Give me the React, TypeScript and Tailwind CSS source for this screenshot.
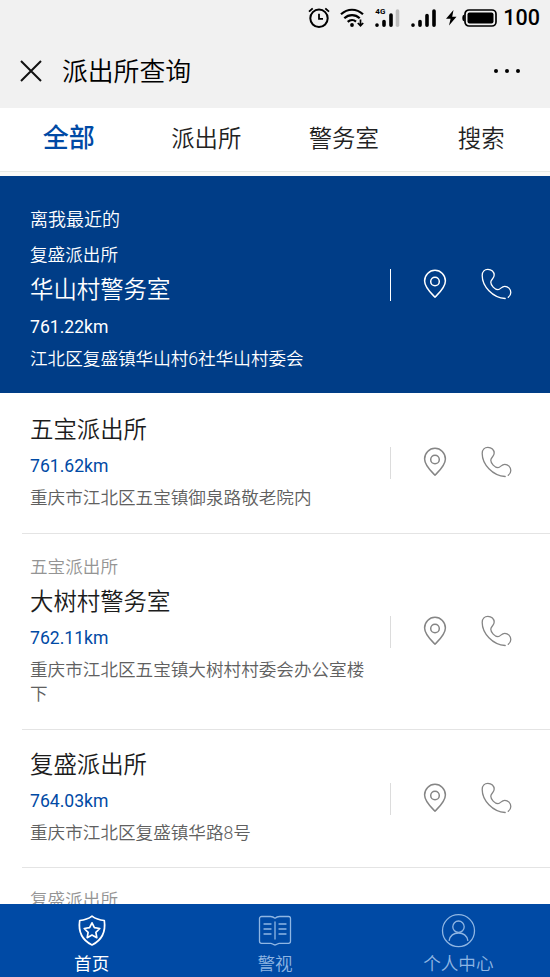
import clsx from "clsx";

interface Station {
  parent?: string;
  name?: string;
  distance?: string;
  address?: string;
  spacing: string;
}

const tabs = ["全部", "派出所", "警务室", "搜索"];

const stations: Station[] = [
  {
    name: "五宝派出所",
    distance: "761.62km",
    address: "重庆市江北区五宝镇御泉路敬老院内",
    spacing: "pt-4 pb-[23px]",
  },
  {
    parent: "五宝派出所",
    name: "大树村警务室",
    distance: "762.11km",
    address: "重庆市江北区五宝镇大树村村委会办公室楼下",
    spacing: "pt-[21px] pb-[23px]",
  },
  {
    name: "复盛派出所",
    distance: "764.03km",
    address: "重庆市江北区复盛镇华路8号",
    spacing: "pt-[14px] pb-[22px]",
  },
  {
    parent: "复盛派出所",
    spacing: "pt-5 pb-6",
  },
];

function StatusBar() {
  return (
    <div className="flex h-9 items-center justify-end pr-[10px] text-black">
      <svg className="mr-[10px] h-[22px] w-[22px]" viewBox="0 0 22 22" fill="none" stroke="currentColor" strokeWidth="2">
        <circle cx="11" cy="11.3" r="8.7" />
        <path d="M11 6.8v5h4M1 4.7 4.700 1.300M21 4.700 17.300 1.300" strokeWidth="1.8" />
      </svg>
      <svg className="mr-[11px] h-[22px] w-6" viewBox="0 0 24 22" fill="none" stroke="currentColor" strokeWidth="2.2">
        <path d="M1 7.3C7.5 1.2 16.5 1.2 23 7.3M4.3 11.2c4.5-4.2 11-4.2 15.4 0M7.7 14.9c2.6-2.3 6-2.3 8.3-.3" />
        <circle cx="12" cy="18" r="1.9" fill="currentColor" stroke="none" />
        <path d="M20.5 12.5v6M17.8 16l2.7 2.8 2.7-2.8" strokeWidth="1.7" />
      </svg>
      <div className="relative mr-[11px] h-[22px] w-[25px]">
        <span className="absolute top-0 left-0 font-['Roboto',sans-serif] text-[8px] leading-[9px] font-bold">4G</span>
        <svg className="h-[22px] w-[25px]" viewBox="0 0 25 22" strokeWidth="3.6" strokeLinecap="round">
          <path d="M2 18v.2M9 14.5v3.7M16 8v10.2" stroke="black" />
          <path d="M22.5 4v14.2" stroke="#bdbdbd" />
        </svg>
      </div>
      <svg className="mr-[10px] h-[22px] w-[25px]" viewBox="0 0 25 22" strokeWidth="3.6" strokeLinecap="round" stroke="black">
        <path d="M2 18v.2M9 14.5v3.7M16 8.5v9.7M23 4v14.2" />
      </svg>
      <svg className="mr-[5px] h-[18px] w-[11px]" viewBox="0 0 11 18" fill="currentColor">
        <path d="M7.5 1 0 9.7h4.6L3 16.5l7.5-8.7H6.2z" />
      </svg>
      <svg className="mr-[6px] h-5 w-[35px]" viewBox="0 0 35 20">
        <path d="M2.5 6.5v7C.9 13.2.3 12 .3 10s.6-3.2 2.2-3.5z" />
        <rect x="3" y="2" width="31" height="16" rx="4" fill="none" stroke="black" strokeWidth="1.7" />
        <rect x="5.5" y="4.5" width="26" height="11" rx="2" />
      </svg>
      <span className="font-['Roboto',sans-serif] text-[21.5px] leading-none font-medium">100</span>
    </div>
  );
}

function PinIcon() {
  return (
    <svg className="h-[30px] w-6" viewBox="0 0 24 30" fill="none" stroke="currentColor" strokeWidth="1.5" strokeLinejoin="round">
      <path d="M12 28.2C8 24.2 1.6 18.5 1.6 12a10.4 10.7 0 0 1 20.8 0c0 6.5-6.4 12.2-10.4 16.2z" />
      <circle cx="12" cy="12.5" r="4.3" />
    </svg>
  );
}

function PhoneIcon() {
  return (
    <svg className="h-8 w-8" viewBox="0 0 32 32" fill="none" stroke="currentColor" strokeWidth="1.3" strokeLinecap="round">
      <path d="M24.2 30.5C11.5 29.8 1.2 18.2 1.2 7.5c0-4 2.5-6.2 5.7-6.2 3.7 0 6.3 2.7 6.3 5.8 0 3.5-3.4 4.2-3.4 7.2 0 3 3.9 7.3 7.2 7.3 2.6 0 3.3-3.3 6.8-3.3 3.2 0 6 2.7 6 6.2 0 2.1-1 3.7-2.5 4.8" />
    </svg>
  );
}

function Actions({ light }: { light?: boolean }) {
  return (
    <div className={clsx("flex shrink-0 items-center", light ? "text-white" : "text-[#858585]")}>
      <span className={clsx("h-8 w-px", light ? "bg-white" : "bg-[#dcdcdc]")} />
      <button className="mb-[2px] ml-8">
        <PinIcon />
      </button>
      <button className="mr-[37.5px] mb-[2px] ml-[33.5px]">
        <PhoneIcon />
      </button>
    </div>
  );
}

function NearestCard() {
  return (
    <section className="flex h-[217px] shrink-0 items-center bg-[#003d87] pl-[30px] text-[17.6px] leading-6 font-[350] text-white">
      <div className="w-[360px]">
        <p className="mt-[9px] text-[18px]">离我最近的</p>
        <p className="mt-[11px]">复盛派出所</p>
        <h2 className="mt-[2px] text-[23.4px] leading-[42px]">华山村警务室</h2>
        <p className="mt-[1px] leading-[30px] font-normal">761.22km</p>
        <p className="mt-[5px]">江北区复盛镇华山村6社华山村委会</p>
      </div>
      <Actions light />
    </section>
  );
}

function StationRow({ parent, name, distance, address, spacing }: Station) {
  return (
    <li className="ml-[22px] flex items-center border-b border-[#e4e4e4] pl-2 text-[17.6px] leading-6 font-[350]">
      <div className={clsx("w-[360px] pr-5", spacing)}>
        {parent && <p className="mb-[2px] text-[#949494]">{parent}</p>}
        {name && <h2 className="text-[23.4px] leading-[42px] text-[#1c1c1c]">{name}</h2>}
        {distance && <p className="leading-[30px] font-normal text-[#004aa5]">{distance}</p>}
        {address && <p className="mt-[5px] text-[#606060]">{address}</p>}
      </div>
      {name && <Actions />}
    </li>
  );
}

function BottomNav() {
  return (
    <nav className="grid h-[73px] shrink-0 grid-cols-3 bg-[#004aa5] text-[17.6px] leading-6 text-[#8fb6e3]">
      <a className="flex flex-col items-center pt-[9px] text-white">
        <svg className="h-9 w-9" viewBox="0 0 36 36" fill="none" stroke="currentColor" strokeWidth="1.7" strokeLinejoin="round">
          <path d="M18 3.2c3.6 2.8 7.5 4 12.3 4.3 1.4 9.8-1.3 19-12.3 24.5C7 26.5 4.3 17.3 5.7 7.5 10.5 7.2 14.4 6 18 3.2z" />
          <path d="m18 9.8 2.4 4.9 5.4.8-3.9 3.8.9 5.4-4.8-2.6-4.8 2.6.9-5.4-3.9-3.8 5.4-.8z" />
        </svg>
        <span className="mt-[3px]">首页</span>
      </a>
      <a className="flex flex-col items-center pt-[9px]">
        <svg className="h-9 w-9" viewBox="0 0 36 36" fill="none" stroke="currentColor" strokeWidth="1.3" strokeLinejoin="round" strokeLinecap="round">
          <path d="M18 5.2c-1.4-1.2-2.7-1.7-4.5-1.7H4.5a2 2 0 0 0-2 2v22.8a2 2 0 0 0 2 2h9.3c1.5 0 2.2 1.7 4.2 1.7s2.7-1.7 4.2-1.7h9.3a2 2 0 0 0 2-2V5.5a2 2 0 0 0-2-2h-9c-1.8 0-3.1.5-4.5 1.7z" />
          <path d="M18 9v17M7 11h7M7 16h7M7 21h7M22 11h7M22 16h7M22 21h7" />
        </svg>
        <span className="mt-[3px] font-[350]">警视</span>
      </a>
      <a className="flex flex-col items-center pt-[9px]">
        <svg className="h-9 w-9" viewBox="0 0 36 36" fill="none" stroke="currentColor" strokeWidth="1.3" strokeLinecap="round">
          <circle cx="18.5" cy="17.7" r="16" />
          <circle cx="18.5" cy="13.7" r="5.7" />
          <path d="M9.2 27.3c1-4.5 4.5-7.3 9.3-7.3s8.3 2.8 9.3 7.3" />
        </svg>
        <span className="mt-[3px] font-[350]">个人中心</span>
      </a>
    </nav>
  );
}

export default function App() {
  return (
    <div className="flex h-[977px] w-[550px] flex-col overflow-hidden bg-white font-['Roboto','Noto_Sans_CJK_SC',sans-serif]">
      <header className="h-[108px] shrink-0 bg-[#f1f1f1]">
        <StatusBar />
        <div className="flex h-[70px] items-center pr-[30px] pl-5 text-[#111]">
          <svg className="h-[22px] w-[22px]" viewBox="0 0 22 22" fill="none" stroke="currentColor" strokeWidth="2">
            <path d="m1 1 20 20M21 1 1 21" />
          </svg>
          <h1 className="mt-[2px] ml-5 text-[25.8px] leading-9 font-[350] text-black">派出所查询</h1>
          <div className="ml-auto flex gap-[6.5px]">
            <i className="size-[4.5px] rounded-full bg-black" />
            <i className="size-[4.5px] rounded-full bg-black" />
            <i className="size-[4.5px] rounded-full bg-black" />
          </div>
        </div>
      </header>

      <div className="h-[68px] shrink-0 bg-[#fafaf8]">
        <div className="grid h-16 grid-cols-4 items-center border-b border-[#e6eae6] bg-white text-center text-[23.4px] font-[350] text-[#222]">
          {tabs.map((tab, i) => (
            <button key={tab} className={clsx(i === 0 && "pb-[3px] text-[26px] font-medium text-[#004aa5]")}>
              {tab}
            </button>
          ))}
        </div>
      </div>

      <main className="flex min-h-0 flex-1 flex-col overflow-hidden">
        <NearestCard />
        <ul>
          {stations.map((station, i) => (
            <StationRow key={i} {...station} />
          ))}
        </ul>
      </main>
      <BottomNav />
    </div>
  );
}
